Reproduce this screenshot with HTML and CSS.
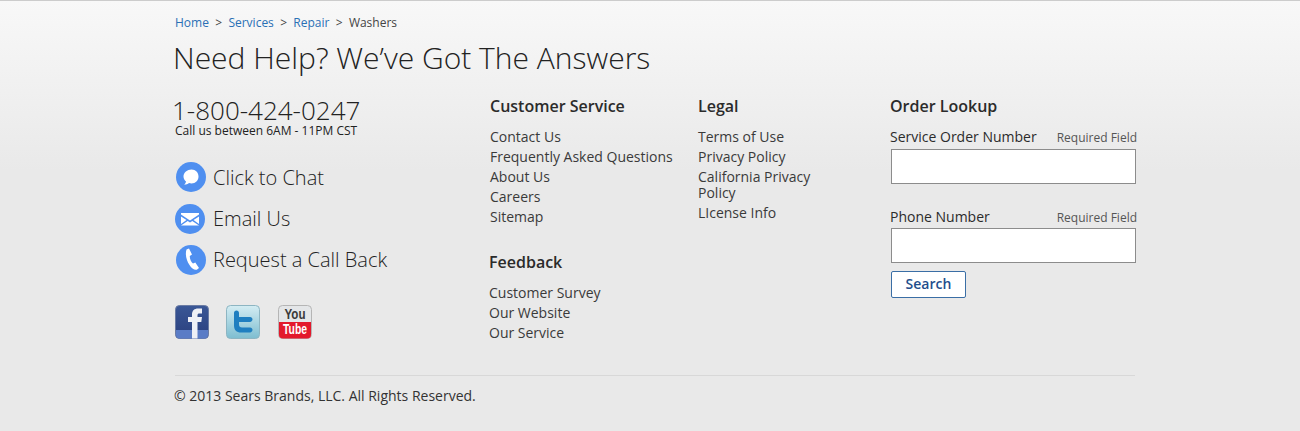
FILE: index.html
```html
<!DOCTYPE html>
<html lang="en-us">
<head>
    <meta charset="utf-8"/>
    <title>Need Help?</title>
    <link rel="stylesheet" href="styles.css">
</head>
<body>
    <footer class="footer">
        <ul class="crumbs">
            <li><a href="#">Home</a></li>
            <li class="sep">&gt;</li>
            <li><a href="#">Services</a></li>
            <li class="sep">&gt;</li>
            <li><a href="#">Repair</a></li>
            <li class="sep">&gt;</li>
            <li>Washers</li>
        </ul>
        <h1>Need Help? We’ve Got The Answers</h1>

        <div class="cols">
            <div class="contact">
                <div class="phone">1-800-424-0247</div>
                <div class="hours">Call us between 6AM - 11PM CST</div>
                <a class="action" href="#">
                    <svg class="round nudge" viewBox="0 0 30 30">
                        <circle cx="15" cy="15" r="15" fill="#4f8ff0"/>
                        <path d="M15.500 7.500c4.200 0 7 3 7 7s-3 7-7 7c-.9 0-1.800-.15-2.500-.45-1.200 1-2.800 1.700-4.800 1.800 1-.9 1.500-2 1.800-3.300C8.500 18.300 7.500 16.600 7.500 14.500c0-4 3.800-7 8-7z" fill="#fff"/>
                    </svg>
                    Click to Chat
                </a>
                <a class="action" href="#">
                    <svg class="round" viewBox="0 0 30 30">
                        <circle cx="15" cy="15" r="15" fill="#4f8ff0"/>
                        <path d="M6 9h18v1.500l-9 6-9-6zM6 12.500l5.500 3.600L6 20zM24 12.500V20l-5.500-3.900zM12.700 17l2.300 1.500 2.300-1.500 6.700 4.500H6z" fill="#fff"/>
                    </svg>
                    Email Us
                </a>
                <a class="action" href="#">
                    <svg class="round nudge" viewBox="0 0 30 30">
                        <circle cx="15" cy="15" r="15" fill="#4f8ff0"/>
                        <path d="M10.500 4.500l2.500-1 3 6-2.200 1.500c-.2 2.500 1.300 6 3.200 7.500l2.300-1 3.700 5.500-2.200 1.700C16 26.500 7.500 14 10.500 4.500z" fill="#fff"/>
                    </svg>
                    Request a Call Back
                </a>
                <div class="social">
                    <svg class="badge" viewBox="0 0 34 34">
                        <defs>
                            <linearGradient id="fb" x1="0" y1="0" x2="0" y2="1">
                                <stop offset="0" stop-color="#3a5796"/>
                                <stop offset="1" stop-color="#2a3f7e"/>
                            </linearGradient>
                        </defs>
                        <rect x=".5" y=".5" width="33" height="33" rx="4" fill="url(#fb)" stroke="#6a7ba3"/>
                        <path d="M1 25h32v5c0 2-1.500 3.500-3.500 3.500h-25C2.500 33.500 1 32 1 30z" fill="#5a7cc6"/>
                        <path d="M17 33.500V17h-4v-5h4V9.500c0-4 2.500-6 6-6h4v5h-2.500c-1.500 0-2 .6-2 2V12h4.500l-.7 5H22.500v16.500z" fill="#eef0f6"/>
                    </svg>
                    <svg class="badge" viewBox="0 0 34 34">
                        <defs>
                            <linearGradient id="sky" x1="0" y1="0" x2="0" y2="1">
                                <stop offset="0" stop-color="#d4edf3"/>
                                <stop offset="1" stop-color="#7dbdd0"/>
                            </linearGradient>
                        </defs>
                        <rect x=".5" y=".5" width="33" height="33" rx="4" fill="url(#sky)" stroke="#8db5c2"/>
                        <path d="M8 8c0-1.500 1-2.500 2.500-2.500S13 6.500 13 8v4h11c1.500 0 2.500 1 2.500 2.300S25.500 17 24 17H13v2.500c0 2 1 3 3 3h8c1.500 0 2.500 1 2.500 2.300S25.500 27.500 24 27.500h-9c-4.500 0-7-2.500-7-7z" fill="#1f7fc0"/>
                    </svg>
                    <svg class="badge third" viewBox="0 0 34 34">
                        <rect x=".5" y=".5" width="33" height="33" rx="4" fill="#e4e6e8" stroke="#b5b5b5"/>
                        <path d="M1 17h32v13c0 2-1.500 3.500-3.500 3.500h-25C2.500 33.500 1 32 1 30z" fill="#e3192c"/>
                        <text class="yt yt-top" x="17" y="14" text-anchor="middle" textLength="21" lengthAdjust="spacingAndGlyphs">You</text>
                        <text class="yt yt-bot" x="17" y="29" text-anchor="middle" textLength="24" lengthAdjust="spacingAndGlyphs">Tube</text>
                    </svg>
                </div>
            </div>

            <div class="links">
                <h2>Customer Service</h2>
                <ul>
                    <li><a href="#">Contact Us</a></li>
                    <li><a href="#">Frequently Asked Questions</a></li>
                    <li><a href="#">About Us</a></li>
                    <li><a href="#">Careers</a></li>
                    <li><a href="#">Sitemap</a></li>
                </ul>
                <h2 class="feedback">Feedback</h2>
                <ul class="feedback-list">
                    <li><a href="#">Customer Survey</a></li>
                    <li><a href="#">Our Website</a></li>
                    <li><a href="#">Our Service</a></li>
                </ul>
            </div>

            <div class="links legal">
                <h2>Legal</h2>
                <ul>
                    <li><a href="#">Terms of Use</a></li>
                    <li><a href="#">Privacy Policy</a></li>
                    <li><a href="#">California Privacy Policy</a></li>
                    <li><a href="#">LIcense Info</a></li>
                </ul>
            </div>

            <form class="lookup">
                <h2>Order Lookup</h2>
                <div class="field-head">
                    <label for="order">Service Order Number</label>
                    <span>Required Field</span>
                </div>
                <input id="order" type="text">
                <div class="field-head second">
                    <label for="phone">Phone Number</label>
                    <span>Required Field</span>
                </div>
                <input id="phone" type="text">
                <button type="button">Search</button>
            </form>
        </div>

        <p class="copy">© 2013 Sears Brands, LLC. All Rights Reserved.</p>
    </footer>
</body>
</html>
```

FILE: styles.css
```css
* {
    box-sizing: border-box;
}

html,
body {
    margin: 0;
    padding: 0;
}

body {
    background: #e9e9e9;
    font-family: "Open Sans", sans-serif;
    color: #333;
}

a {
    color: inherit;
    text-decoration: none;
}

ul {
    list-style: none;
    margin: 0;
    padding: 0;
}

.footer {
    height: 431px;
    padding: 14px 165px 0 175px;
    border-top: 1px solid #ccc;
    background: linear-gradient(#f8f8f8 0, #e9e9e9 170px);
}

.crumbs {
    display: flex;
    gap: 6.300px;
    height: 16px;
    font-size: 12px;
    line-height: 16px;
    color: #444;
}

.crumbs a {
    color: #2a70b5;
}

h1 {
    margin: 6px 0 0 -2px;
    font-size: 30px;
    font-weight: 300;
    line-height: 42px;
    color: #222;
}

.cols {
    display: flex;
    height: 280px;
    margin-top: 16px;
}

.contact {
    flex: none;
    width: 315px;
}

.phone {
    margin: 1px 0 0 -3px;
    font-size: 26px;
    font-weight: 300;
    line-height: 28px;
    color: #222;
}

.hours {
    font-size: 12px;
    line-height: 14px;
    color: #222;
}

.action {
    display: flex;
    align-items: center;
    gap: 8px;
    height: 30px;
    margin-top: 11px;
    font-size: 20px;
    font-weight: 300;
    color: #222;
}

.hours + .action {
    margin-top: 24px;
}

.round {
    width: 30px;
    height: 30px;
    flex: none;
}

.action + .action .round {
    margin-top: 2px;
}

.round.nudge {
    margin-left: 1px;
    margin-right: -1px;
}

.social {
    display: flex;
    gap: 17px;
    margin-top: 31px;
}

.badge {
    width: 34px;
    height: 34px;
    overflow: visible;
}

.badge.third {
    margin-left: 1px;
}

.yt {
    font-family: "Liberation Sans", sans-serif;
    font-weight: 700;
}

.yt-top {
    font-size: 15px;
    fill: #3a3a3a;
}

.yt-bot {
    font-size: 14px;
    fill: #fff;
}

h2 {
    margin: 0;
    font-size: 16px;
    font-weight: 600;
    line-height: 22px;
    color: #2b2b2b;
}

.links {
    flex: none;
    width: 208px;
}

.links ul {
    margin-top: 10px;
    font-size: 14px;
    line-height: 20px;
    color: #3a3a3a;
}

.feedback {
    margin: 24px 0 0 -1px;
}

.links .feedback-list {
    margin-left: -1px;
}

.legal {
    width: 192px;
    padding-right: 60px;
}

.legal li {
    line-height: 16px;
    padding: 2px 0;
}

.lookup {
    flex: none;
    width: 247px;
}

.field-head {
    display: flex;
    justify-content: space-between;
    align-items: baseline;
    margin-top: 10px;
    height: 20px;
    font-size: 14px;
    line-height: 20px;
    color: #2b2b2b;
}

.field-head span {
    font-size: 12px;
    color: #555;
}

.field-head.second {
    margin-top: 23px;
}

input {
    display: block;
    width: 245px;
    height: 35px;
    margin: 2px 0 0 1px;
    border: 1px solid #8c8c8c;
    background: #fff;
    padding: 0 5px;
}

.second + input {
    margin-top: 1px;
}

button {
    display: block;
    width: 75px;
    height: 27px;
    margin: 8px 0 0 1px;
    border: 1px solid #3a6ea5;
    border-radius: 2px;
    background: #fff;
    font-family: inherit;
    font-size: 14px;
    font-weight: 600;
    color: #1f4e8c;
    padding: 0 0 2px;
}

.copy {
    margin: 0;
    padding-top: 10px;
    border-top: 1px solid #d8d8d8;
    font-size: 14px;
    line-height: 20px;
    text-indent: -1px;
    color: #333;
}
```
